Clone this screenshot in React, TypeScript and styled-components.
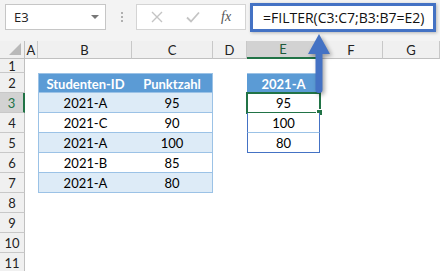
import React from "react";
import styled, { createGlobalStyle } from "styled-components";

const GlobalStyle = createGlobalStyle`
  html, body {
    margin: 0;
    padding: 0;
    background: #ffffff;
    overflow: hidden;
  }
`;

const Page = styled.div`
  position: relative;
  width: 440px;
  height: 271px;
  overflow: hidden;
  background: #ffffff;
  font-family: Lato, "Liberation Sans", sans-serif;
`;

const Toolbar = styled.div`
  display: flex;
  align-items: flex-start;
  height: 41px;
  padding-left: 5px;
  box-sizing: border-box;
  background: #f3f3f3;
`;

const NameBox = styled.div`
  display: flex;
  align-items: center;
  justify-content: space-between;
  width: 101px;
  height: 26px;
  margin-top: 4px;
  padding: 0 6px 0 8px;
  box-sizing: border-box;
  background: #ffffff;
  border: 1px solid #c6c6c6;
  font-family: "Open Sans", sans-serif;
  font-size: 13px;
  color: #222;
`;

const Caret = styled.span`
  width: 0;
  height: 0;
  border-left: 4px solid transparent;
  border-right: 4px solid transparent;
  border-top: 4px solid #777;
`;

const Dots = styled.div`
  display: flex;
  flex-direction: column;
  gap: 2px;
  margin: 12px 0 0 15px;
  & > span {
    width: 2px;
    height: 2px;
    background: #b0b0b0;
  }
`;

const FuncBox = styled.div`
  display: flex;
  align-items: center;
  width: 110px;
  height: 26px;
  margin: 4px 0 0 13px;
  padding-left: 14px;
  box-sizing: border-box;
  background: #ffffff;
  border: 1px solid #d4d4d4;
  gap: 23px;
`;

const Fx = styled.span`
  font-family: "Liberation Serif", serif;
  font-style: italic;
  font-size: 14px;
  color: #555;
  margin-left: -2px;
`;

const FormulaBox = styled.div`
  display: flex;
  align-items: center;
  width: 186px;
  height: 29px;
  margin: 3px 0 0 4px;
  padding-left: 10px;
  box-sizing: border-box;
  background: #ffffff;
  border: 3px solid #4472c4;
  box-shadow: 1px 1px 3px rgba(0, 0, 0, 0.25);
  font-family: "Open Sans", sans-serif;
  font-size: 14px;
  color: #111;
  white-space: nowrap;
`;

const Sheet = styled.div`
  display: grid;
  grid-template-columns: 25px 13px 94px 81px 34px 73px 63px 1fr;
  grid-template-rows: 18px 14px repeat(10, 20px);
  font-size: 13px;
`;

const Corner = styled.div`
  position: relative;
  background: #f0f0f0;
  border-right: 1px solid #c0c0c0;
  border-bottom: 1px solid #c0c0c0;
  &::after {
    content: "";
    position: absolute;
    right: 3px;
    bottom: 3px;
    width: 12px;
    height: 12px;
    background: #b9b9b9;
    clip-path: polygon(100% 0, 100% 100%, 0 100%);
  }
`;

const ColHead = styled.div<{ $selected?: boolean }>`
  display: flex;
  align-items: center;
  justify-content: center;
  box-sizing: border-box;
  background: ${(p) => (p.$selected ? "#d2d2d2" : "#f0f0f0")};
  border-right: 1px solid #c8c8c8;
  border-bottom: ${(p) => (p.$selected ? "2px solid #217346" : "1px solid #c0c0c0")};
  color: ${(p) => (p.$selected ? "#1e5b3a" : "#222")};
`;

const RowHead = styled.div<{ $selected?: boolean }>`
  display: flex;
  align-items: center;
  justify-content: center;
  box-sizing: border-box;
  background: ${(p) => (p.$selected ? "#d2d2d2" : "#f0f0f0")};
  border-right: ${(p) => (p.$selected ? "2px solid #217346" : "1px solid #c0c0c0")};
  border-bottom: 1px solid #c8c8c8;
  color: ${(p) => (p.$selected ? "#217346" : "#222")};
`;

const Blank = styled.div``;

const TableCell = styled.div<{
  $head?: boolean;
  $band?: boolean;
  $first?: boolean;
  $last?: boolean;
}>`
  display: flex;
  align-items: center;
  justify-content: center;
  box-sizing: border-box;
  padding-top: 1px;
  background: ${(p) => (p.$head ? "#5b9bd5" : p.$band ? "#ddebf7" : "#ffffff")};
  color: ${(p) => (p.$head ? "#ffffff" : "#000")};
  font-weight: ${(p) => (p.$head ? 700 : 400)};
  border-top: ${(p) => (p.$head ? "1px solid #9bc2e6" : "none")};
  border-bottom: 1px solid #9bc2e6;
  border-left: ${(p) => (p.$first ? "1px solid #9bc2e6" : "none")};
  border-right: ${(p) => (p.$last ? "1px solid #9bc2e6" : "none")};
`;

const ResultCell = styled.div<{ $last?: boolean }>`
  position: relative;
  display: flex;
  align-items: center;
  justify-content: center;
  box-sizing: border-box;
  padding-top: 1px;
  background: #ffffff;
  border-left: 1px solid #4472c4;
  border-right: 1px solid #4472c4;
  border-bottom: 1px solid ${(p) => (p.$last ? "#4472c4" : "#9bc2e6")};
`;

const Selection = styled.div`
  position: absolute;
  left: -2px;
  top: -1px;
  right: -2px;
  bottom: -2px;
  border: 2px solid #217346;
  pointer-events: none;
  &::after {
    content: "";
    position: absolute;
    right: -4px;
    bottom: -4px;
    width: 5px;
    height: 5px;
    background: #217346;
    border: 1px solid #ffffff;
  }
`;

const Arrow = styled.svg`
  position: absolute;
  left: 306px;
  top: 32px;
  overflow: visible;
  filter: drop-shadow(2px 2px 2px rgba(0, 0, 0, 0.35));
`;

const columns = ["A", "B", "C", "D", "E", "F", "G"];

const table = [
  ["2021-A", "95"],
  ["2021-C", "90"],
  ["2021-A", "100"],
  ["2021-B", "85"],
  ["2021-A", "80"],
];

const result = ["95", "100", "80"];

const renderCell = (row: number, col: string) => {
  const key = `${col}${row}`;
  if (row >= 2 && row <= 7 && (col === "B" || col === "C")) {
    const head = row === 2;
    const value = head
      ? col === "B"
        ? "Studenten-ID"
        : "Punktzahl"
      : table[row - 3][col === "B" ? 0 : 1];
    return (
      <TableCell
        key={key}
        $head={head}
        $band={row % 2 === 1}
        $first={col === "B"}
        $last={col === "C"}
      >
        {value}
      </TableCell>
    );
  }
  if (col === "E" && row === 2) {
    return (
      <TableCell key={key} $head>
        2021-A
      </TableCell>
    );
  }
  if (col === "E" && row >= 3 && row <= 5) {
    return (
      <ResultCell key={key} $last={row === 5}>
        {result[row - 3]}
        {row === 3 && <Selection />}
      </ResultCell>
    );
  }
  return <Blank key={key} />;
};

export default function App() {
  const rows = Array.from({ length: 11 }, (_, i) => i + 1);
  return (
    <Page>
      <GlobalStyle />
      <Toolbar>
        <NameBox>
          E3
          <Caret />
        </NameBox>
        <Dots>
          <span />
          <span />
          <span />
        </Dots>
        <FuncBox>
          <svg width="12" height="12" viewBox="0 0 12 12">
            <path d="M1 1 L11 11 M11 1 L1 11" stroke="#c4c4c4" strokeWidth="1.4" fill="none" />
          </svg>
          <svg width="14" height="12" viewBox="0 0 14 12">
            <path d="M1 6.5 L5 10.5 L13 1.5" stroke="#c4c4c4" strokeWidth="1.8" fill="none" />
          </svg>
          <Fx>fx</Fx>
        </FuncBox>
        <FormulaBox>=FILTER(C3:C7;B3:B7=E2)</FormulaBox>
      </Toolbar>
      <Sheet>
        <Corner />
        {columns.map((c) => (
          <ColHead key={c} $selected={c === "E"}>
            {c}
          </ColHead>
        ))}
        {rows.map((r) => (
          <React.Fragment key={r}>
            <RowHead $selected={r === 3}>{r}</RowHead>
            {columns.map((c) => renderCell(r, c))}
          </React.Fragment>
        ))}
      </Sheet>
      <Arrow width="26" height="62" viewBox="0 0 26 62">
        <path d="M13 2 L24 22 L16.5 22 L16.5 58 Q16.5 61 13 61 Q9.5 61 9.5 58 L9.5 22 L2 22 Z" fill="#4472c4" />
      </Arrow>
    </Page>
  );
}
